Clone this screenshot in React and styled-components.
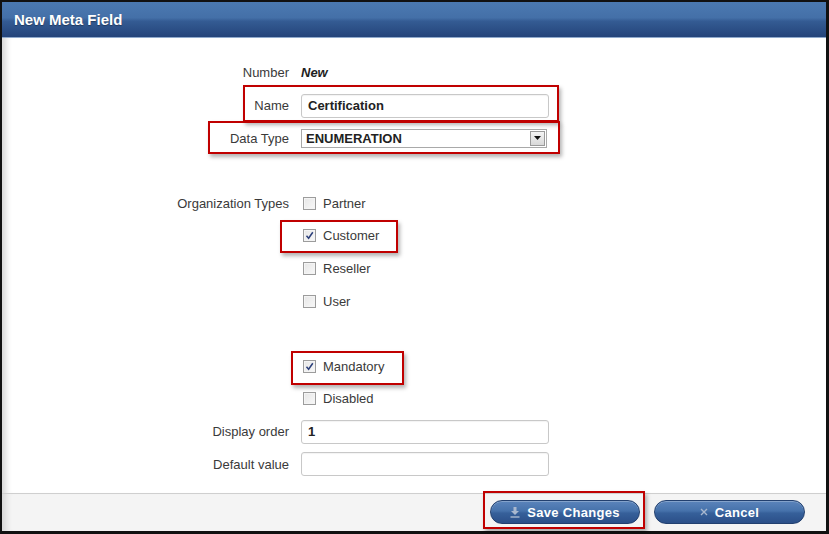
import styled, { createGlobalStyle } from "styled-components";

const GlobalStyle = createGlobalStyle`
  html, body { margin: 0; padding: 0; background: #fff; }
  body { font-family: "Liberation Sans", Arial, sans-serif; }
  * { box-sizing: border-box; }
`;

const Frame = styled.div`
  width: 829px;
  height: 534px;
  border-style: solid;
  border-color: #111;
  border-width: 2px 3px 3px 2px;
  display: flex;
  flex-direction: column;
  background: #fff;
`;

const Header = styled.div`
  height: 36px;
  flex: none;
  padding-left: 12px;
  display: flex;
  align-items: center;
  background: linear-gradient(#4b79b1 0%, #4470a8 45%, #345b93 55%, #24447a 100%);
  border-bottom: 1px solid #8fa9cc;
  color: #fff;
  font-weight: bold;
  font-size: 15px;
  text-shadow: 0 1px 1px rgba(0, 0, 0, 0.35);
`;

const Body = styled.div`
  flex: 1;
  padding-top: 18.7px;
  box-shadow: inset 9px 0 6px -5px #d6d6d6;
`;

const Row = styled.div`
  position: relative;
  height: 32.6px;
  display: grid;
  grid-template-columns: 287px 248px;
  column-gap: 12px;
  align-items: center;
  font-size: 13px;
  color: #3a3a3a;
`;

const Label = styled.div`
  text-align: right;
`;

const Value = styled.div`
  font-weight: bold;
  font-style: ${(p) => (p.$italic ? "italic" : "normal")};
  color: #222;
`;

const TextInput = styled.div`
  height: 24px;
  border: 1px solid #c8c8c8;
  border-radius: 3px;
  padding-left: 6px;
  display: flex;
  align-items: center;
  font-weight: bold;
  color: #222;
  background: #fff;
  box-shadow: inset 0 1px 1px rgba(0, 0, 0, 0.05);
`;

const Select = styled.div`
  width: 246px;
  height: 19px;
  border: 1px solid #a9a9a9;
  display: flex;
  align-items: center;
  justify-content: space-between;
  padding: 0 1px 0 4px;
  font-weight: bold;
  color: #222;
  background: #fff;
`;

const SelectButton = styled.span`
  width: 15px;
  height: 15px;
  border: 1px solid #9a9a9a;
  background: linear-gradient(#f4f4f4, #d8d8d8);
  display: flex;
  align-items: center;
  justify-content: center;
`;

const Check = styled.label`
  display: flex;
  align-items: center;
  gap: 7px;
  padding-left: 2px;
  color: #3a3a3a;
`;

const Box = styled.span`
  width: 13px;
  height: 13px;
  border: 1px solid #9c9c9c;
  background: linear-gradient(135deg, #e6e6e6, #f8f8f8);
  box-shadow: inset 0 0 0 1px #f4f4f4;
  display: flex;
  align-items: center;
  justify-content: center;
`;

const Highlight = styled.span`
  position: absolute;
  left: ${(p) => p.$left}px;
  width: ${(p) => p.$width}px;
  top: ${(p) => p.$top}px;
  height: ${(p) => p.$height}px;
  border: 2px solid #c00000;
  box-shadow: 2px 3px 4px rgba(0, 0, 0, 0.3);
  pointer-events: none;
`;

const Footer = styled.div`
  height: 38px;
  flex: none;
  border-top: 1px solid #cfcfcf;
  background: #f4f4f4;
  box-shadow: inset 9px 0 6px -5px #d6d6d6;
  display: flex;
  justify-content: flex-end;
  gap: 14px;
  padding: 6px 21px 0 0;
`;

const ButtonWrap = styled.div`
  position: relative;
  height: 24px;
`;

const Button = styled.button`
  width: ${(p) => p.$width}px;
  height: 24px;
  border: 1px solid #22406f;
  border-radius: 12px;
  background: linear-gradient(#5b84bb 0%, #4672ab 45%, #36609a 55%, #2b4f88 100%);
  color: #fff;
  font-family: "Liberation Sans", Arial, sans-serif;
  font-weight: bold;
  font-size: 13px;
  letter-spacing: 0.3px;
  display: flex;
  align-items: center;
  justify-content: center;
  gap: 7px;
  box-shadow: inset 0 1px 0 rgba(255, 255, 255, 0.25);
  cursor: pointer;
`;

const Tick = () => (
  <svg width="9" height="9" viewBox="0 0 9 9">
    <path d="M1.5 4.8 L3.6 7.2 L7.8 1.2" fill="none" stroke="#2b3f7a" strokeWidth="1.5" />
  </svg>
);

function CheckRow({ label, checked, children }) {
  return (
    <Row>
      <Label>{label}</Label>
      <Check>
        <Box>{checked && <Tick />}</Box>
        {children}
      </Check>
    </Row>
  );
}

export default function App() {
  return (
    <>
      <GlobalStyle />
      <Frame>
        <Header>New Meta Field</Header>
        <Body>
          <Row>
            <Label>Number</Label>
            <Value $italic>New</Value>
          </Row>
          <Row>
            <Label>Name</Label>
            <TextInput>Certification</TextInput>
            <Highlight $left={241} $width={316} $top={-4.5} $height={37} />
          </Row>
          <Row>
            <Label>Data Type</Label>
            <Select>
              ENUMERATION
              <SelectButton>
                <svg width="7" height="4" viewBox="0 0 7 4">
                  <path d="M0 0 H7 L3.5 4 Z" fill="#111" />
                </svg>
              </SelectButton>
            </Select>
            <Highlight $left={206} $width={352} $top={-1} $height={33} />
          </Row>
          <Row />
          <CheckRow label="Organization Types">Partner</CheckRow>
          <CheckRow checked>
            Customer
            <Highlight $left={278} $width={118} $top={0} $height={33} />
          </CheckRow>
          <CheckRow>Reseller</CheckRow>
          <CheckRow>User</CheckRow>
          <Row />
          <CheckRow checked>
            Mandatory
            <Highlight $left={289} $width={113} $top={1} $height={34} />
          </CheckRow>
          <CheckRow>Disabled</CheckRow>
          <Row>
            <Label>Display order</Label>
            <TextInput>1</TextInput>
          </Row>
          <Row>
            <Label>Default value</Label>
            <TextInput />
          </Row>
        </Body>
        <Footer>
          <ButtonWrap>
            <Button $width={150}>
              <svg width="10" height="11" viewBox="0 0 10 11">
                <path d="M3.5 0 H6.5 V4 H9 L5 8 L1 4 H3.5 Z" fill="#a9b8cf" />
                <rect x="0.5" y="9.3" width="9" height="1.4" fill="#a9b8cf" />
              </svg>
              Save Changes
            </Button>
            <Highlight $left={-7} $width={162} $top={-9} $height={38} />
          </ButtonWrap>
          <ButtonWrap>
            <Button $width={151}>
              <svg width="8" height="8" viewBox="0 0 8 8">
                <path d="M1 1 L7 7 M7 1 L1 7" stroke="#a9b8cf" strokeWidth="1.4" />
              </svg>
              Cancel
            </Button>
          </ButtonWrap>
        </Footer>
      </Frame>
    </>
  );
}
